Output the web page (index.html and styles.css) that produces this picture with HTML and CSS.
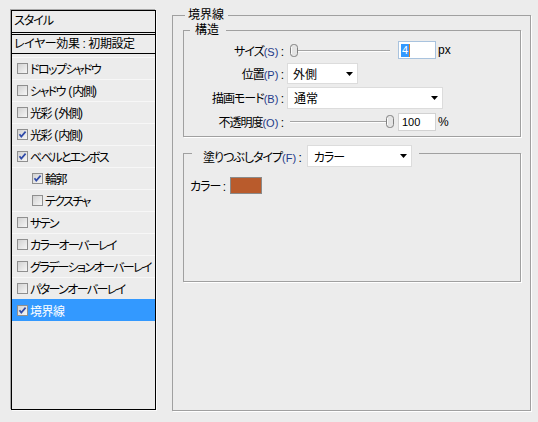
FILE: index.html
```html
<!DOCTYPE html>
<html lang="ja">
<head>
<meta charset="utf-8">
<title>レイヤースタイル</title>
<link rel="stylesheet" href="styles.css">
</head>
<body>
<div class="dialog">
  <div class="style-list">
    <div class="list-head">スタイル</div>
    <div class="list-default">レイヤー効果 : 初期設定</div>
    <ul class="effects">
      <li class="effect"><span class="cb"></span>ドロップシャドウ</li>
      <li class="effect"><span class="cb"></span>シャドウ<span class="latin"> (</span>内側<span class="latin">)</span></li>
      <li class="effect"><span class="cb"></span>光彩<span class="latin"> (</span>外側<span class="latin">)</span></li>
      <li class="effect"><span class="cb"><svg viewBox="0 0 11 11" width="11" height="11"><path d="M2.5 5.2 L4.3 7.6 L8.6 2.6" fill="none" stroke="#2f4aa8" stroke-width="1.7"/></svg></span>光彩<span class="latin"> (</span>内側<span class="latin">)</span></li>
      <li class="effect"><span class="cb"><svg viewBox="0 0 11 11" width="11" height="11"><path d="M2.5 5.2 L4.3 7.6 L8.6 2.6" fill="none" stroke="#2f4aa8" stroke-width="1.7"/></svg></span>ベベルとエンボス</li>
      <li class="effect sub"><span class="cb"><svg viewBox="0 0 11 11" width="11" height="11"><path d="M2.5 5.2 L4.3 7.6 L8.6 2.6" fill="none" stroke="#2f4aa8" stroke-width="1.7"/></svg></span>輪郭</li>
      <li class="effect sub"><span class="cb"></span>テクスチャ</li>
      <li class="effect"><span class="cb"></span>サテン</li>
      <li class="effect"><span class="cb"></span>カラーオーバーレイ</li>
      <li class="effect"><span class="cb"></span>グラデーションオーバーレイ</li>
      <li class="effect"><span class="cb"></span>パターンオーバーレイ</li>
      <li class="effect selected"><span class="cb"><svg viewBox="0 0 11 11" width="11" height="11"><path d="M2.5 5.2 L4.3 7.6 L8.6 2.6" fill="none" stroke="#2f4aa8" stroke-width="1.7"/></svg></span>境界線</li>
    </ul>
  </div>

  <fieldset class="group outer">
    <legend class="outer-legend">境界線</legend>

    <fieldset class="group structure">
      <legend class="structure-legend">構造</legend>
      <div class="form-grid">
        <div class="label">サイズ<span class="acc">(S)</span> :</div>
        <div class="ctrl">
          <div class="slider">
            <span class="track"></span>
            <svg class="thumb thumb-min" viewBox="0 0 8 13" width="8" height="13"><rect x="0.5" y="0.5" width="7" height="12" rx="3" fill="#e4e4e4" stroke="#808080"/><path d="M1.5 3 V10" stroke="#fafafa"/></svg>
          </div>
          <div class="num focused"><span class="sel">4</span><span class="caret"></span></div>
          <span class="unit">px</span>
        </div>

        <div class="label">位置<span class="acc">(P)</span> :</div>
        <div class="ctrl">
          <div class="select select-pos"><span>外側</span><svg viewBox="0 0 7 4" width="7" height="4"><polygon points="0,0 7,0 3.5,4" fill="#000"/></svg></div>
        </div>

        <div class="label">描画モード<span class="acc">(B)</span> :</div>
        <div class="ctrl">
          <div class="select select-mode"><span>通常</span><svg viewBox="0 0 7 4" width="7" height="4"><polygon points="0,0 7,0 3.5,4" fill="#000"/></svg></div>
        </div>

        <div class="label">不透明度<span class="acc">(O)</span> :</div>
        <div class="ctrl">
          <div class="slider">
            <span class="track"></span>
            <svg class="thumb thumb-max" viewBox="0 0 8 13" width="8" height="13"><rect x="0.5" y="0.5" width="7" height="12" rx="3" fill="#e4e4e4" stroke="#808080"/><path d="M1.5 3 V10" stroke="#fafafa"/></svg>
          </div>
          <div class="num">100</div>
          <span class="unit">%</span>
        </div>
      </div>
    </fieldset>

    <fieldset class="group fill">
      <legend class="fill-legend">
        <div class="fill-head">
          <span>塗りつぶしタイプ<span class="acc">(F)</span> :</span>
          <div class="select select-fill"><span>カラー</span><svg viewBox="0 0 7 4" width="7" height="4"><polygon points="0,0 7,0 3.5,4" fill="#000"/></svg></div>
        </div>
      </legend>
      <div class="color-row">
        <span>カラー :</span>
        <span class="swatch"></span>
      </div>
    </fieldset>
  </fieldset>
</div>
</body>
</html>
```

FILE: styles.css
```css
* {
  box-sizing: border-box;
}

html,
body {
  margin: 0;
  padding: 0;
}

body {
  width: 538px;
  height: 422px;
  overflow: hidden;
  background: #ececec;
  color: #000;
  font-family: "Liberation Sans", "Noto Sans CJK JP", sans-serif;
  font-size: 12px;
  font-feature-settings: "palt";
  letter-spacing: -1px;
}

.dialog {
  display: flex;
  align-items: flex-start;
  gap: 16px;
  padding-left: 11px;
}

/* ---------- left style list ---------- */
.style-list {
  margin-top: 10px;
  width: 145px;
  height: 400px;
  border: 1px solid #000;
  box-shadow: -1px -1px 0 #a8a8a8, 1px 1px 0 #fbfbfb;
}

.list-head {
  height: 24px;
  line-height: 21px;
  padding-left: 2px;
  border-bottom: 3px double #000;
}

.list-default {
  height: 19px;
  line-height: 18px;
  padding-left: 2px;
  border-bottom: 1px solid #000;
  letter-spacing: -0.4px;
  white-space: pre;
}

.effects {
  list-style: none;
  margin: 0;
  padding: 3px 0 0;
}

.effect {
  display: flex;
  align-items: center;
  height: 22px;
  padding-left: 5px;
  border-top: 1px solid #f7f7f7;
  white-space: pre;
  letter-spacing: -1.6px;
}

.latin {
  letter-spacing: 0;
}

.effect.sub {
  padding-left: 20px;
}

.effect.selected {
  background: #3399ff;
  border-top-color: #3399ff;
  color: #fff;
  letter-spacing: -0.5px;
}

.cb {
  flex: none;
  width: 11px;
  height: 11px;
  margin-right: 2px;
  border: 1px solid #8f8f8f;
  background: linear-gradient(135deg, #d2d2d2, #f6f6f6);
  position: relative;
}

.cb svg {
  position: absolute;
  left: -1px;
  top: -1px;
}

/* ---------- group boxes ---------- */
.group {
  margin: 0;
  min-width: 0;
  border: 1px solid #a0a0a0;
  box-shadow: 1px 1px 0 #fff;
}

.group legend {
  line-height: 14px;
  height: 14px;
}

.outer {
  margin-top: 8px;
  width: 359px;
  height: 403px;
  padding: 0 9px 0 10px;
}

.outer-legend {
  margin-left: 2px;
  padding: 0 4px 0 3px;
  letter-spacing: 0;
}

.structure {
  margin-top: 1px;
  width: 338px;
  height: 114px;
  padding: 1px 0 0 0;
}

.structure-legend {
  margin-left: 6px;
  padding: 0 7px 0 5px;
  letter-spacing: 0;
}

.form-grid {
  display: grid;
  grid-template-columns: 99px auto;
  grid-template-rows: 24px 23px 25px 23px;
  column-gap: 4px;
  align-items: center;
}

.label {
  text-align: right;
  white-space: pre;
}

.acc {
  color: #1f3a8a;
  letter-spacing: 0;
  font-size: 11px;
}

.ctrl {
  display: flex;
  align-items: center;
  letter-spacing: 0;
}

.slider {
  position: relative;
  width: 104px;
  height: 13px;
  margin-left: 3px;
}

.track {
  position: absolute;
  left: 0;
  top: 6px;
  width: 100px;
  height: 2px;
  border-top: 1px solid #a4a4a4;
  border-bottom: 1px solid #fdfdfd;
}

.thumb {
  position: absolute;
  top: 0;
}

.thumb-min {
  left: 0;
}

.thumb-max {
  left: 96px;
}

.num {
  display: flex;
  align-items: center;
  width: 38px;
  height: 18px;
  margin-left: 4px;
  padding-left: 3px;
  background: #fff;
  border: 1px solid #d2d2d2;
  font-size: 11px;
}

.num.focused {
  padding-left: 2px;
  border-color: #a9c3de;
}

.sel {
  background: #3399ff;
  color: #fff;
  line-height: 13px;
  padding: 0 1px;
}

.caret {
  width: 1px;
  height: 13px;
  background: #d9822b;
}

.unit {
  margin-left: 2px;
}

.select {
  display: flex;
  align-items: center;
  justify-content: space-between;
  height: 21px;
  padding: 0 4px 0 5px;
  background: #fff;
  border: 1px solid #dcdcdc;
}

.select svg {
  flex: none;
}

.select-pos {
  width: 71px;
}

.select-mode {
  width: 156px;
  height: 22px;
  padding-left: 6px;
}

/* ---------- fill box ---------- */
.fill {
  margin-top: 3px;
  width: 338px;
  height: 142px;
  padding: 0;
}

.fill .fill-legend {
  height: auto;
  line-height: normal;
  margin-left: 8px;
  padding: 5px 7px 0 11px;
}

.fill-head {
  display: flex;
  align-items: center;
  gap: 6px;
  white-space: pre;
}

.select-fill {
  width: 105px;
  height: 22px;
  padding-left: 6px;
}

.color-row {
  display: flex;
  align-items: center;
  gap: 5px;
  height: 18px;
  margin-top: 9px;
  padding-left: 6px;
  white-space: pre;
}

.swatch {
  width: 32px;
  height: 17px;
  border: 1px solid #8a8a8a;
  background: #b95b2c;
}
```
